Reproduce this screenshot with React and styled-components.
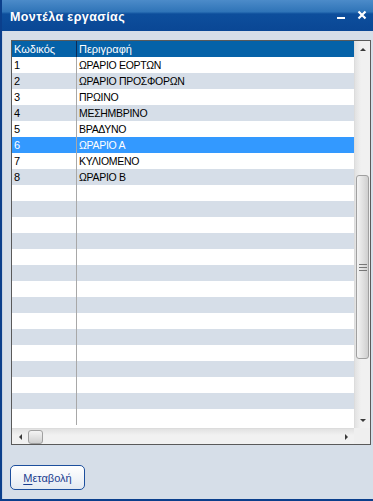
import React from 'react'
import styled, { createGlobalStyle } from 'styled-components'

const GlobalStyle = createGlobalStyle`
  html, body {
    margin: 0;
    padding: 0;
    background: #d6dee8;
  }
  * { box-sizing: border-box; }
`;

const rows = [
    { code: '1', name: 'ΩΡΑΡΙΟ ΕΟΡΤΩΝ' },
    { code: '2', name: 'ΩΡΑΡΙΟ ΠΡΟΣΦΟΡΩΝ' },
    { code: '3', name: 'ΠΡΩΙΝΟ' },
    { code: '4', name: 'ΜΕΣΗΜΒΡΙΝΟ' },
    { code: '5', name: 'ΒΡΑΔΥΝΟ' },
    { code: '6', name: 'ΩΡΑΡΙΟ Α' },
    { code: '7', name: 'ΚΥΛΙΟΜΕΝΟ' },
    { code: '8', name: 'ΩΡΑΡΙΟ Β' },
];

const TOTAL_ROWS = 23;
const SELECTED = 5;

const Window = styled.div`
    width: 373px;
    height: 501px;
    display: flex;
    flex-direction: column;
    border-left: 2px solid #0b3f8c;
    border-bottom: 2px solid #0b3f8c;
    font-family: "Liberation Sans", Arial, sans-serif;
    overflow: hidden;
`;

const TitleBar = styled.div`
    height: 31px;
    flex: none;
    display: flex;
    align-items: center;
    padding: 2px 6px 0 8px;
    background: linear-gradient(to bottom, #4c8bc9 0%, #2f74b8 38%, #0d4e9c 45%, #0a4795 100%);
    color: #fff;
`;

const Title = styled.div`
    flex: 1;
    font-size: 12.5px;
    font-weight: bold;
    letter-spacing: 0.4px;
`;

const TitleButtons = styled.div`
    display: flex;
    align-items: center;
    gap: 11px;
    margin-top: -4px;
`;

const Body = styled.div`
    flex: 1;
    display: flex;
    flex-direction: column;
    padding: 9px 4px 0 8px;
    border-left: 1px solid #c4d2e4;
`;

const GridBox = styled.div`
    width: 360px;
    height: 405px;
    border: 1px solid #5a5a5a;
    display: grid;
    grid-template-columns: 1fr 16px;
    grid-template-rows: 1fr 16px;
    background: #fff;
`;

const Table = styled.div`
    overflow: hidden;
    display: flex;
    flex-direction: column;
    font-size: 11px;
`;

const Row = styled.div`
    height: 16px;
    flex: none;
    display: grid;
    grid-template-columns: 64px 1fr;
    background: ${p => p.$header ? '#0562a8' : p.$selected ? '#3399ff' : p.$alt ? '#d6dee8' : '#ffffff'};
    color: ${p => (p.$header || p.$selected) ? '#ffffff' : '#000000'};
`;

const Cell = styled.div`
    padding: 1px 0 0 2px;
    line-height: 14px;
    white-space: nowrap;
    overflow: hidden;
    font-size: ${p => p.$caps ? '10.5px' : '11px'};
    letter-spacing: ${p => p.$caps ? '-0.3px' : '0'};
    border-left: ${p => p.$second ? (p.$header ? '1px solid #0c2a55' : '1px solid #a8a8a8') : 'none'};
`;

const VScroll = styled.div`
    display: flex;
    flex-direction: column;
    background: linear-gradient(to right, #e2e2e2, #f1f1f1 40%, #f1f1f1);
    border-left: 1px solid #dcdcdc;
`;

const HScroll = styled.div`
    display: flex;
    align-items: center;
    background: linear-gradient(to bottom, #e2e2e2, #f1f1f1 40%, #f1f1f1);
    border-top: 1px solid #dcdcdc;
`;

const Corner = styled.div`
    background: #efefef;
`;

const ArrowBox = styled.div`
    width: 16px;
    height: 16px;
    flex: none;
    display: flex;
    align-items: center;
    justify-content: center;
`;

const Track = styled.div`
    flex: 1;
`;

const VThumb = styled.div`
    margin: 0 1px;
    height: 184px;
    border: 1px solid #a0a0a0;
    border-radius: 3px;
    background: linear-gradient(to right, #f4f4f4, #dedede 60%, #cfcfcf);
    display: flex;
    align-items: center;
    justify-content: center;
`;

const HThumb = styled.div`
    width: 15px;
    height: 14px;
    border: 1px solid #a0a0a0;
    border-radius: 3px;
    background: linear-gradient(to bottom, #f4f4f4, #dedede 60%, #cfcfcf);
`;

const Footer = styled.div`
    padding-top: 20px;
    margin-left: -1px;
`;

const Button = styled.button`
    width: 75px;
    height: 25px;
    border: 1px solid #1d4f9d;
    border-radius: 5px;
    background: linear-gradient(to bottom, #ffffff, #f2f5f9 50%, #e3e9f1);
    color: #1b3d8f;
    font-family: "Liberation Sans", Arial, sans-serif;
    font-size: 11px;
    padding: 0;
    cursor: pointer;
    & u { text-decoration-thickness: 1px; text-underline-offset: 2px; }
`;

const Arrow = ({ dir }) => {
    const pts = {
        up: '1,4 4,1 7,4',
        down: '1,1 4,4 7,1',
        left: '4,1 1,4 4,7',
        right: '1,1 4,4 1,7',
    }[dir];
    const w = dir === 'up' || dir === 'down' ? 8 : 5;
    const h = dir === 'up' || dir === 'down' ? 5 : 8;
    return (
        <svg width={w} height={h} viewBox={`0 0 ${w} ${h}`}>
            <polygon points={pts} fill="#3a3a3a" />
        </svg>
    );
};

const App = () => {
    const list = Array.from({ length: TOTAL_ROWS }, (_, i) => rows[i] || { code: '', name: '' });
    return (
        <Window>
            <GlobalStyle />
            <TitleBar>
                <Title>Μοντέλα εργασίας</Title>
                <TitleButtons>
                    <svg width="10" height="10" viewBox="0 0 10 10">
                        <rect x="1" y="7" width="8" height="2" fill="#fff" />
                    </svg>
                    <svg width="10" height="10" viewBox="0 0 10 10">
                        <path d="M1.5 1.5 L8.5 8.5 M8.5 1.5 L1.5 8.5" stroke="#fff" strokeWidth="2.2" />
                    </svg>
                </TitleButtons>
            </TitleBar>
            <Body>
                <GridBox>
                    <Table>
                        <Row $header>
                            <Cell>Κωδικός</Cell>
                            <Cell $second $header>Περιγραφή</Cell>
                        </Row>
                        {list.map((r, i) => (
                            <Row key={i} $alt={i % 2 === 1} $selected={i === SELECTED}>
                                <Cell>{r.code}</Cell>
                                <Cell $second $caps>{r.name}</Cell>
                            </Row>
                        ))}
                    </Table>
                    <VScroll>
                        <ArrowBox><Arrow dir="up" /></ArrowBox>
                        <Track>
                            <div style={{ height: 118 }} />
                            <VThumb>
                                <svg width="8" height="7" viewBox="0 0 8 7">
                                    <rect x="0" y="0" width="8" height="1" fill="#777" />
                                    <rect x="0" y="3" width="8" height="1" fill="#777" />
                                    <rect x="0" y="6" width="8" height="1" fill="#777" />
                                </svg>
                            </VThumb>
                        </Track>
                        <ArrowBox><Arrow dir="down" /></ArrowBox>
                    </VScroll>
                    <HScroll>
                        <ArrowBox><Arrow dir="left" /></ArrowBox>
                        <HThumb />
                        <Track />
                        <ArrowBox><Arrow dir="right" /></ArrowBox>
                    </HScroll>
                    <Corner />
                </GridBox>
                <Footer>
                    <Button><u>Μ</u>εταβολή</Button>
                </Footer>
            </Body>
        </Window>
    )
}

export default App;
